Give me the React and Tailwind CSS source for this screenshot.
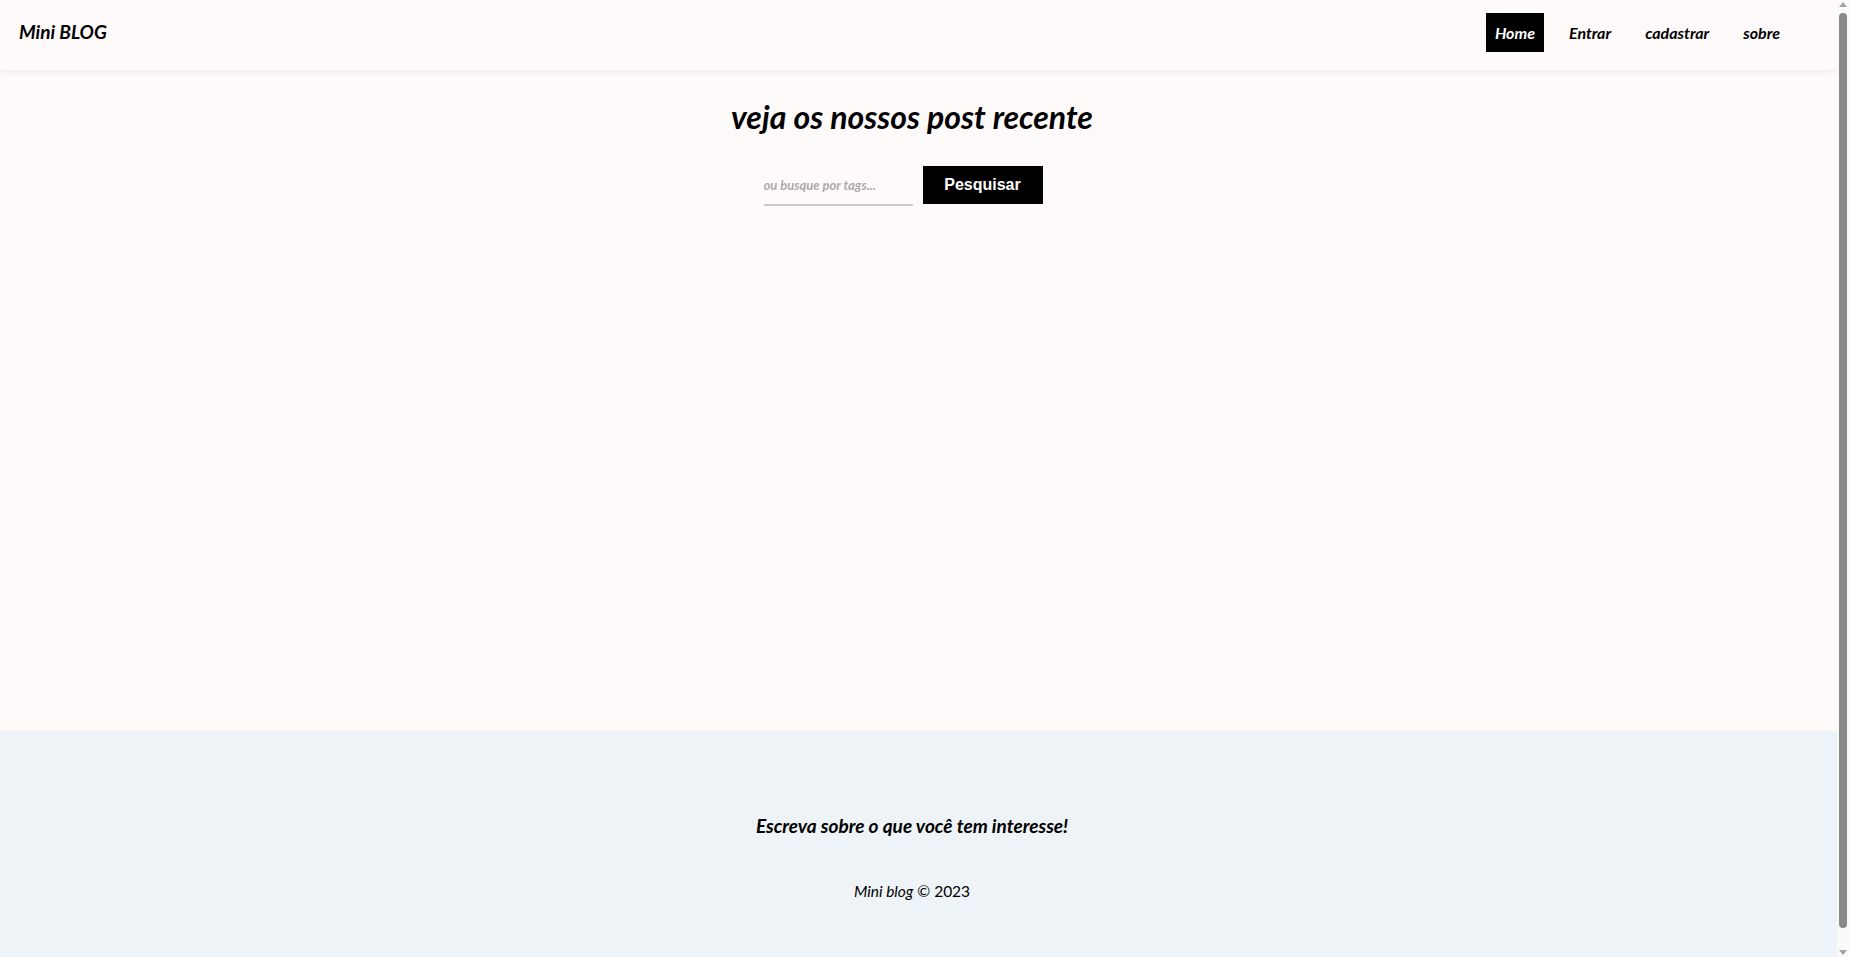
export default function App() {
  const links = ['Home', 'Entrar', 'cadastrar', 'sobre'];

  return (
    <div className="bg-[#fafafa]">
      <div
        className="flex min-h-[974px] w-[calc(100%-12px)] flex-col bg-[#fffafa] text-black"
        style={{ fontFamily: 'Lato, "Noto Sans", sans-serif' }}
      >
        {/* Navbar */}
        <nav className="flex h-[70px] items-center justify-between pb-[6px] pl-[19px] pr-8 shadow-[0_-2px_10px_rgba(0,0,0,0.15)]">
          <a className="text-[19px] font-bold italic">Mini BLOG</a>
          <ul className="flex">
            {links.map((l, i) => (
              <li key={l} className="mr-4">
                <a
                  className={`block px-[9px] py-[8px] text-[16px] font-bold italic leading-[23px] ${
                    i === 0 ? 'bg-black text-white' : 'text-black'
                  }`}
                >
                  {l}
                </a>
              </li>
            ))}
          </ul>
        </nav>

        {/* Home */}
        <main className="flex flex-1 flex-col items-center pr-[13px]">
          <h1 className="mt-[26px] text-[32px] font-bold italic leading-[42px]">veja os nossos post recente</h1>
          <form className="mr-[18px] mt-[28px] flex items-start gap-[10px]">
            <input
              type="text"
              placeholder="ou busque por tags..."
              className="h-[40px] w-[149px] border-b-2 border-[#cccccc] bg-transparent text-[13px] font-bold italic outline-none placeholder:text-[#aaaaaa]"
            />
            <button
              type="button"
              className="h-[38px] w-[120px] bg-black text-[16px] font-bold text-white"
              style={{ fontFamily: '"Liberation Sans", Arial, sans-serif' }}
            >
              Pesquisar
            </button>
          </form>
        </main>

        {/* Footer */}
        <footer className="flex h-[243px] flex-col items-center justify-center bg-[#edf3f6] pr-[13px] pt-[10px]">
          <h3 className="text-[19px] font-bold italic">Escreva sobre o que você tem interesse!</h3>
          <p className="mt-[40px] text-[15.5px]">
            <span className="italic">Mini blog</span> © 2023
          </p>
        </footer>
      </div>

      {/* Scrollbar */}
      <div className="fixed right-0 top-0 flex h-screen w-[12px] flex-col items-center bg-[#fafafa] py-[2px]">
        <svg width="8" height="5" viewBox="0 0 8 5">
          <path d="M4 0 L8 5 L0 5 Z" fill="#a3a3a3" />
        </svg>
        <div className="mt-[6px] w-[8px] flex-1 rounded-full bg-[#8a8a8a]" />
        <svg width="8" height="5" viewBox="0 0 8 5" className="mt-[22px]">
          <path d="M0 0 L8 0 L4 5 Z" fill="#a3a3a3" />
        </svg>
      </div>
    </div>
  );
}
